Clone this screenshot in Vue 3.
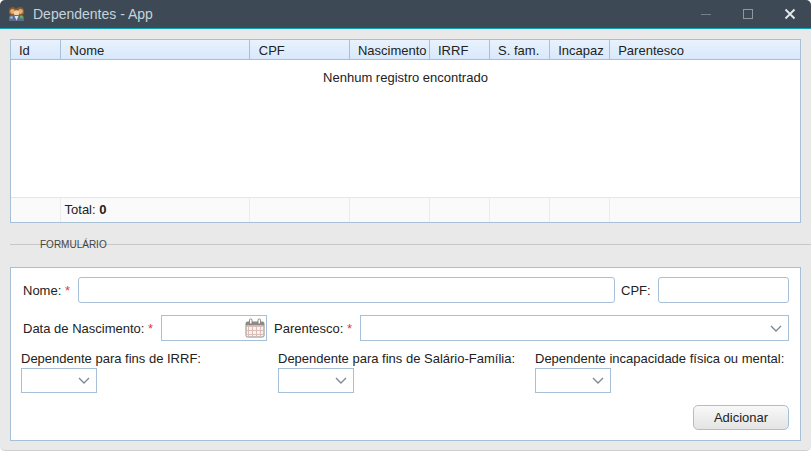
<script setup>
const columns = [
  { label: 'Id', width: 49 },
  { label: 'Nome', width: 189 },
  { label: 'CPF', width: 100 },
  { label: 'Nascimento', width: 80 },
  { label: 'IRRF', width: 60 },
  { label: 'S. fam.', width: 60 },
  { label: 'Incapaz', width: 60 },
  { label: 'Parentesco', width: 190 }
]
const calendarCols = [3, 7, 11, 15]
const calendarRows = [8, 12, 16]
</script>

<template>
  <div class="window">
    <header class="titlebar">
      <svg class="app-icon" width="17" height="16" viewBox="0 0 17 16">
        <path d="M1 8q-1-7 4-7 2 0 3 2 1-2 4-2 5 0 4 7l-2 1H3z" fill="#8d5a2a" />
        <circle cx="4.5" cy="5.5" r="2.4" fill="#e2ac73" />
        <circle cx="12.5" cy="5.5" r="2.4" fill="#e2ac73" />
        <circle cx="8.5" cy="7" r="2.8" fill="#f3cfa6" />
        <path d="M1 15v-3q0-3 3-3h9q3 0 3 3v3z" fill="#58708f" />
        <path d="M6.5 10h4l-2 4.5z" fill="#dfe6ec" />
        <circle cx="13.5" cy="11" r="1.6" fill="#6fae4e" />
        <circle cx="3.5" cy="11.5" r="1.3" fill="#a9b9c9" />
      </svg>
      <span class="title">Dependentes - App</span>
      <div class="controls">
        <svg width="12" height="12" viewBox="0 0 12 12"><path d="M1 6.5h10" stroke="#758089" fill="none" /></svg>
        <svg width="12" height="12" viewBox="0 0 12 12"><rect x="1.5" y="1.5" width="9" height="9" stroke="#8f989f" fill="none" /></svg>
        <svg width="12" height="12" viewBox="0 0 12 12"><path d="M1.5 1.5l9 9M10.5 1.5l-9 9" stroke="#e6e9eb" stroke-width="1.8" fill="none" /></svg>
      </div>
    </header>

    <main class="content">
      <div class="table-box">
        <table>
          <colgroup>
            <col v-for="c in columns" :key="c.label" :style="{ width: c.width + 'px' }" />
          </colgroup>
          <thead>
            <tr>
              <th v-for="c in columns" :key="c.label">{{ c.label }}</th>
            </tr>
          </thead>
          <tbody>
            <tr>
              <td class="empty" colspan="8">Nenhum registro encontrado</td>
            </tr>
          </tbody>
          <tfoot>
            <tr>
              <td></td>
              <td class="total">Total: <b>0</b></td>
              <td></td>
              <td></td>
              <td></td>
              <td></td>
              <td></td>
              <td></td>
            </tr>
          </tfoot>
        </table>
      </div>

      <div class="divider"><span>FORMULÁRIO</span></div>

      <form class="panel" @submit.prevent>
        <div class="row row-name">
          <label class="name-label">Nome: <i>*</i></label>
          <input class="text name" type="text" />
          <label class="cpf-label">CPF:</label>
          <input class="text cpf" type="text" />
        </div>
        <div class="row row-birth">
          <label class="birth-label">Data de Nascimento: <i>*</i></label>
          <div class="box date">
            <svg width="20" height="20" viewBox="0 0 20 20">
              <rect x="1" y="4" width="18" height="15" rx="1.5" fill="#f8f3f0" stroke="#8e8a86" />
              <rect x="1" y="4" width="18" height="3.5" fill="#8e8a86" />
              <path v-for="x in calendarCols" :key="x" :d="`M${x + 0.5} 7.5v11`" stroke="#d9bdb6" />
              <path v-for="y in calendarRows" :key="y" :d="`M1.5 ${y + 0.5}h17`" stroke="#d9bdb6" />
              <rect x="4.5" y="1" width="2.5" height="5" rx="1" fill="#fff" stroke="#77736f" stroke-width=".8" />
              <rect x="13" y="1" width="2.5" height="5" rx="1" fill="#fff" stroke="#77736f" stroke-width=".8" />
            </svg>
          </div>
          <label class="kin-label">Parentesco: <i>*</i></label>
          <div class="box select kin">
            <svg class="chevron" width="12" height="7" viewBox="0 0 12 7"><path d="M1 1l5 5 5-5" stroke="#7d8a96" stroke-width="1.4" fill="none" /></svg>
          </div>
        </div>
        <div class="row-selects">
          <div class="field field-irrf">
            <label>Dependente para fins de IRRF:</label>
            <div class="box select small">
              <svg class="chevron" width="12" height="7" viewBox="0 0 12 7"><path d="M1 1l5 5 5-5" stroke="#7d8a96" stroke-width="1.4" fill="none" /></svg>
            </div>
          </div>
          <div class="field field-family">
            <label>Dependente para fins de Salário-Família:</label>
            <div class="box select small">
              <svg class="chevron" width="12" height="7" viewBox="0 0 12 7"><path d="M1 1l5 5 5-5" stroke="#7d8a96" stroke-width="1.4" fill="none" /></svg>
            </div>
          </div>
          <div class="field">
            <label>Dependente incapacidade física ou mental:</label>
            <div class="box select small">
              <svg class="chevron" width="12" height="7" viewBox="0 0 12 7"><path d="M1 1l5 5 5-5" stroke="#7d8a96" stroke-width="1.4" fill="none" /></svg>
            </div>
          </div>
        </div>
        <div class="actions">
          <button type="button">Adicionar</button>
        </div>
      </form>
    </main>
  </div>
</template>

<style>
html, body {
  margin: 0;
  background: #ffffff;
}
</style>

<style scoped>
.window {
  width: 811px;
  height: 451px;
  box-sizing: border-box;
  background: #e9e9e9;
  border-bottom: 1px solid #cfcfcf;
  border-radius: 5px;
  overflow: hidden;
  font-family: "Liberation Sans", Arial, sans-serif;
  font-size: 13px;
  color: #222;
}

.titlebar {
  height: 28px;
  background: #3d4a55;
  border-bottom: 1px solid #12a3b8;
  display: flex;
  align-items: center;
  padding-left: 8px;
}

.app-icon {
  margin-right: 8px;
}

.title {
  color: #c7d3dd;
  font-size: 14px;
}

.controls {
  margin-left: auto;
  display: flex;
  gap: 30px;
  padding-right: 15px;
}

.content {
  padding: 10px 10px 0;
}

.table-box {
  border: 1px solid #a6c0d8;
  background: #fff;
}

table {
  width: 100%;
  border-collapse: collapse;
  table-layout: fixed;
}

th {
  height: 19px;
  padding: 4px 0 0 8px;
  line-height: 14px;
  box-sizing: border-box;
  background: linear-gradient(#e9f2fd, #d8e8fb);
  border-bottom: 1px solid #a6c0d8;
  border-left: 1px solid #a6c0d8;
  font-weight: normal;
  text-align: left;
  white-space: nowrap;
  overflow: hidden;
}

th:first-child {
  border-left: none;
}

th:nth-child(2),
th:nth-child(3) {
  padding-left: 9px;
}

.empty {
  height: 138px;
  box-sizing: border-box;
  vertical-align: top;
  text-align: center;
  padding-top: 10px;
}

tfoot td {
  height: 25px;
  box-sizing: border-box;
  background: #fafafa;
  border-top: 1px solid #e6e6e6;
  border-left: 1px solid #ececec;
}

tfoot td:first-child {
  border-left: none;
}

.total {
  padding-left: 4px;
}

.divider {
  position: relative;
  height: 42px;
  padding-bottom: 2px;
  display: flex;
  align-items: center;
  margin-right: -10px;
}

.divider::before {
  content: "";
  flex: 1;
  height: 1px;
  background: #c8c8c8;
}

.divider span {
  position: absolute;
  left: 30px;
  font-size: 10px;
  color: #444;
}

.panel {
  height: 172px;
  border: 1px solid #a6c0d8;
  background: #fff;
}

.row {
  display: flex;
  align-items: center;
  height: 26px;
  padding-left: 12px;
}

.row-name {
  margin-top: 9px;
}

.row-birth {
  margin-top: 12px;
}

label {
  white-space: nowrap;
}

label i {
  color: #e0393e;
  font-style: normal;
}

.name-label {
  flex: none;
  width: 55px;
}

.text {
  height: 26px;
  box-sizing: border-box;
  border: 1px solid #a6c0d8;
  border-radius: 3px;
  background: #fff;
  padding: 0;
  outline: none;
}

.name {
  width: 537px;
}

.cpf-label {
  flex: none;
  width: 37px;
  margin-left: 6px;
}

.cpf {
  width: 131px;
}

.box {
  height: 26px;
  box-sizing: border-box;
  border: 1px solid #a6c0d8;
  background: #fff;
  display: flex;
  align-items: center;
  justify-content: flex-end;
}

.birth-label {
  flex: none;
  width: 138px;
}

.date {
  width: 106px;
  padding-right: 1px;
}

.kin-label {
  flex: none;
  width: 86px;
  margin-left: 7px;
}

.kin {
  width: 429px;
}

.chevron {
  margin-right: 6px;
}

.row-selects {
  display: flex;
  margin-top: 10px;
  padding-left: 10px;
}

.field {
  display: flex;
  flex-direction: column;
  gap: 2px;
  white-space: nowrap;
}

.field-irrf,
.field-family {
  width: 257px;
}

.small {
  width: 76px;
  height: 25px;
}

.actions {
  display: flex;
  justify-content: flex-end;
  margin-top: 12px;
  padding-right: 11px;
}

button {
  width: 96px;
  height: 25px;
  border: 1px solid #a6c0d8;
  border-radius: 5px;
  background: linear-gradient(#f8f8f8, #e4e4e4);
  font: inherit;
  color: #222;
  padding: 0;
}
</style>
